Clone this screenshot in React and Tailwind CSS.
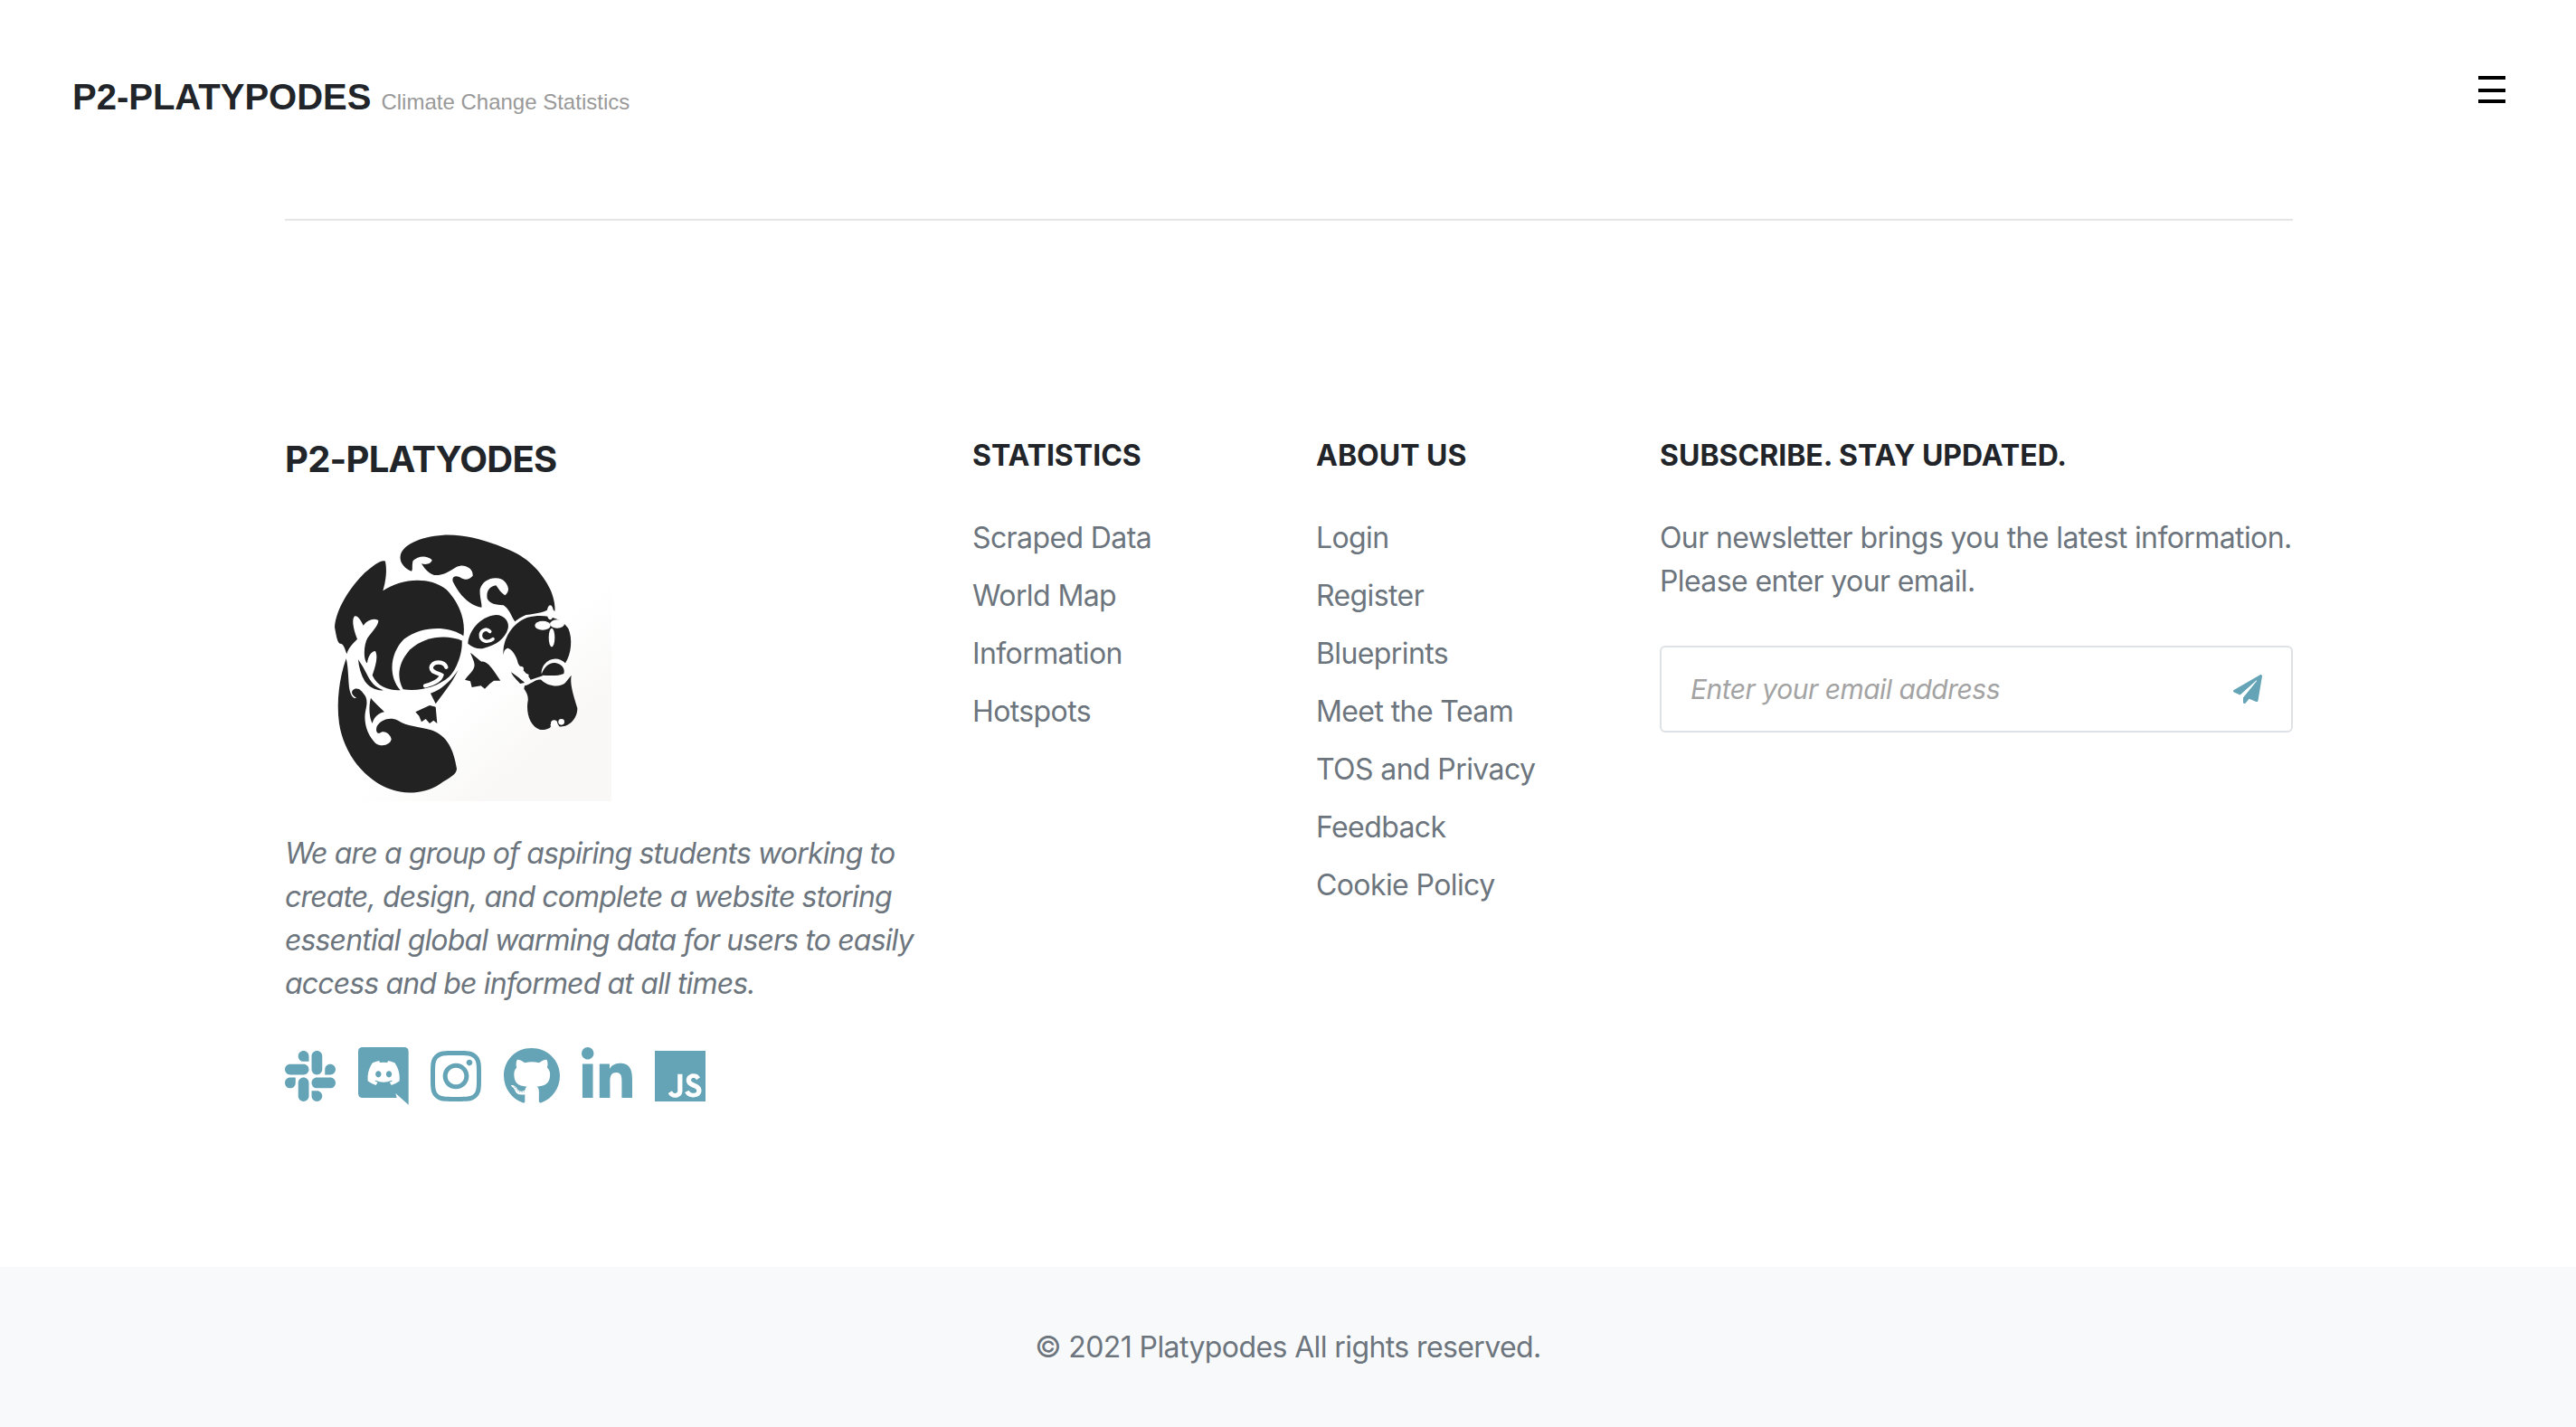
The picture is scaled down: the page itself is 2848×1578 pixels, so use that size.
import { FaSlack, FaDiscord, FaInstagram, FaGithub, FaLinkedinIn, FaPaperPlane } from "react-icons/fa";
import { SiJavascript } from "react-icons/si";

const statsLinks = ["Scraped Data", "World Map", "Information", "Hotspots"];
const aboutLinks = ["Login", "Register", "Blueprints", "Meet the Team", "TOS and Privacy", "Feedback", "Cookie Policy"];

const PlatypusLogo = () => (
  <svg viewBox="45 30 1083 918" className="block w-[361px] h-[306px]">
    <defs>
      <linearGradient id="logoBg" x1="0.8" y1="0.4" x2="1" y2="0.6">
        <stop offset="0" stopColor="#ffffff" />
        <stop offset="1" stopColor="#f9f8f7" />
      </linearGradient>
    </defs>
    <rect x="45" y="30" width="1083" height="918" fill="url(#logoBg)" />
    <g fill="#222222">
      {/* back */}
      <path d="M428,135 C432,100 490,70 570,65 C650,62 720,85 790,115 C860,145 900,195 925,245 C938,275 942,300 940,318 L925,305 C915,320 880,325 845,330 C820,340 812,350 808,352 C795,335 790,310 770,298 C745,295 725,295 716,275 C712,250 725,235 745,232 C755,245 760,255 775,265 C795,250 785,225 765,212 C735,200 700,215 692,245 C690,270 700,295 697,305 C660,300 625,265 605,225 C595,210 605,195 625,205 C640,215 655,215 668,200 C670,175 640,160 615,170 C590,185 570,200 540,198 C515,190 505,170 498,160 C515,165 530,160 533,148 C515,130 485,135 470,150 C465,165 470,180 465,185 C440,175 425,155 428,135 Z" />
      {/* left lobe and body */}
      <path d="M378,152 C385,185 378,225 370,250 C430,210 520,200 580,245 C625,290 645,350 637,400 C590,365 500,365 440,410 C395,455 385,530 428,580 C385,580 350,565 335,530 C345,500 355,470 345,450 C330,450 320,470 318,490 C305,480 305,430 320,405 C335,385 355,365 355,348 C340,340 320,345 305,365 C295,345 285,330 275,335 C265,350 275,385 285,410 C270,425 255,440 250,460 C245,445 240,425 228,425 C220,425 215,400 210,370 C215,310 260,240 310,190 C340,165 365,145 378,152 Z" />
      <path d="M288,478 C300,495 308,510 316,525 C330,555 345,570 372,580 C345,582 325,570 310,550 C298,530 290,505 288,478 Z" />
      {/* inner swirl */}
      <path d="M632,415 C580,395 510,400 460,445 C420,490 415,535 437,577 C490,585 550,570 590,535 C615,510 635,455 632,415 Z" />
      <path d="M620,512 C600,555 570,590 545,625 L528,590 C560,580 595,550 620,512 Z" />
      {/* tail */}
      <path d="M248,475 C225,540 215,620 225,690 C240,790 310,880 400,910 C440,925 510,925 560,890 C590,870 615,860 615,840 C605,780 585,730 530,712 C490,700 450,700 420,680 C395,668 365,675 350,700 C345,715 350,725 360,722 C375,710 395,725 398,742 C395,762 365,770 345,755 C320,730 305,690 312,650 C318,625 320,605 305,590 C295,575 280,570 270,580 C262,590 272,600 282,605 C275,610 262,600 258,570 C255,540 255,500 248,475 Z" />
      <path d="M330,605 C340,620 365,640 375,652 C355,655 340,670 335,690 C325,670 322,635 330,605 Z" />
      {/* feet */}
      <path d="M478,652 L525,630 L545,635 L550,690 L538,680 L525,690 L512,675 L498,685 L490,665 Z" />
      <path d="M660,455 C680,470 690,480 697,485 C715,480 735,510 760,548 L738,548 L725,558 L708,575 L695,565 L665,570 L660,550 L642,545 C660,520 680,510 672,485 Z" />
      {/* belly swirl */}
      <path d="M652,425 C655,385 690,335 745,330 C775,330 790,355 785,375 C775,410 745,430 705,440 C690,445 670,440 652,425 Z" />
      {/* head and bill */}
      <path d="M770,465 C765,410 800,355 850,338 C900,325 960,335 985,375 C1000,410 995,460 975,490 C955,470 925,470 905,495 C895,510 893,525 900,532 L860,545 C845,520 825,505 818,490 C815,470 800,445 785,440 C775,442 770,450 770,465 Z" />
      <path d="M895,530 C905,500 925,485 945,490 C965,495 975,510 970,525 C945,535 920,530 895,530 Z" />
      <path d="M840,565 C860,560 880,540 895,545 C920,570 960,570 975,555 L995,530 C990,560 1000,590 1015,640 C1015,680 980,705 955,700 C945,680 935,680 925,695 C935,705 905,715 890,710 C860,700 845,660 850,620 C855,600 845,585 838,575 Z" />
      <path d="M795,520 C810,530 830,545 840,555 L825,558 C815,548 800,532 795,520 Z" />
    </g>
    <g fill="#ffffff">
      <ellipse cx="925" cy="322" rx="11" ry="24" />
      <ellipse cx="900" cy="365" rx="26" ry="15" />
      <ellipse cx="948" cy="360" rx="24" ry="14" />
      <ellipse cx="930" cy="405" rx="10" ry="31" />
      <ellipse cx="826" cy="509" rx="11" ry="9" />
      <circle cx="938" cy="690" r="11" />
      <circle cx="962" cy="685" r="10" />
    </g>
    <g fill="none" stroke="#ffffff" strokeLinecap="round">
      <path d="M725,385 C710,370 690,385 695,405 C700,415 715,425 735,410" strokeWidth="11" />
      <path d="M580,503 C572,482 535,482 530,505 C530,522 550,520 565,530 C560,548 530,560 510,565" strokeWidth="13" />
      <path d="M785,465 C795,490 815,520 850,530" strokeWidth="8" />
    </g>
  </svg>
);

// old discord logo, the speech bubble one
const DiscordBubble = () => (
  <svg viewBox="288 54 168 192" className="w-[56px] h-[64px]" fill="currentColor">
    <path d="M303,54 H440 Q455,54 455,69 V245 L412,207 L416,222 H303 Q288,222 288,207 V69 Q288,54 303,54 Z" />
    <FaDiscord x={315} y={82} size={115} color="#ffffff" />
  </svg>
);

const App = () => {
  return (
    <div className="min-h-[1578px] flex flex-col bg-white font-['Inter',sans-serif] text-[32px] leading-[48px] tracking-[-0.6px] text-[#6c757d]">
      <header className="h-[242px] pl-[80px] pr-[78px] pt-[78px] flex justify-between items-start tracking-normal">
        <div className="flex items-baseline gap-[11px] font-['Liberation_Sans',sans-serif]">
          <span className="text-[40px] leading-[58px] font-bold text-[#212529]">P2-PLATYPODES</span>
          <span className="text-[24px] leading-[58px] text-[#999999]">Climate Change Statistics</span>
        </div>
        <button className="mt-[6px] w-[30px] flex flex-col">
          <span className="block h-[4px] bg-black" />
          <span className="block h-[4px] mt-[10px] bg-black" />
          <span className="block h-[4px] mt-[8px] bg-black" />
        </button>
      </header>

      <div className="w-[2220px] ml-[315px] border-t-2 border-[#e5e5e5]" />

      <footer className="w-[2220px] ml-[315px] flex-1 pt-[236px] grid grid-cols-[760px_380px_380px_1fr]">
        <div>
          <h3 className="mt-[4px] text-[40px] leading-[48px] font-bold tracking-[-0.75px] text-[#212529]">P2-PLATYODES</h3>
          <div className="mt-[48px]">
            <PlatypusLogo />
          </div>
          <p className="mt-[34px] w-[710px] italic tracking-[-0.85px]">
            We are a group of aspiring students working to create, design, and complete a website storing essential global warming data for users to easily access and be informed at all times.
          </p>
          <div className="mt-[46px] flex items-center gap-[24.5px] text-[#64a4b6]">
            <FaSlack className="w-[56px] h-[64px]" />
            <DiscordBubble />
            <FaInstagram className="w-[56px] h-[64px]" />
            <FaGithub className="w-[62px] h-[64px]" />
            <FaLinkedinIn className="w-[56px] h-[64px]" />
            <SiJavascript className="w-[56px] h-[56px]" />
          </div>
        </div>

        <div>
          <h4 className="font-bold tracking-normal text-[#212529]">STATISTICS</h4>
          <ul className="mt-[43px] flex flex-col gap-[16px]">
            {statsLinks.map((link) => (
              <li key={link}>{link}</li>
            ))}
          </ul>
        </div>

        <div>
          <h4 className="font-bold tracking-normal text-[#212529]">ABOUT US</h4>
          <ul className="mt-[43px] flex flex-col gap-[16px]">
            {aboutLinks.map((link) => (
              <li key={link}>{link}</li>
            ))}
          </ul>
        </div>

        <div>
          <h4 className="font-bold tracking-normal text-[#212529]">SUBSCRIBE. STAY UPDATED.</h4>
          <p className="mt-[43px]">Our newsletter brings you the latest information. Please enter your email.</p>
          <div className="mt-[47px] h-[96px] px-[32px] flex items-center border-2 border-[#dee2e6] rounded-[6px]">
            <input
              placeholder="Enter your email address"
              className="flex-1 min-w-0 outline-none italic text-[30px] tracking-[-0.5px] placeholder:text-[#a3a3a3]"
            />
            <FaPaperPlane className="text-[32px] text-[#64a4b6]" />
          </div>
        </div>
      </footer>

      <div className="h-[177px] bg-[#f8f9fa] flex items-center justify-center">
        © 2021 Platypodes All rights reserved.
      </div>
    </div>
  );
};

export default App;
